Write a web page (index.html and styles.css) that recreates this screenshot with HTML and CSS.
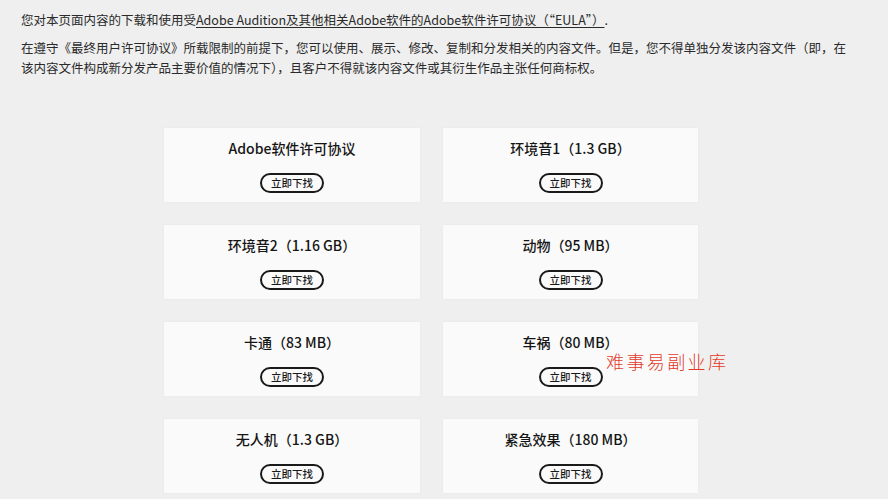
FILE: index.html
```html
<!DOCTYPE html>
<html lang="zh">
<head>
<meta charset="utf-8">
<link rel="stylesheet" href="styles.css">
</head>
<body>
<div class="page">
  <p class="intro">您对本页面内容的下载和使用受<span class="link">Adobe Audition及其他相关Adobe软件的Adobe软件许可协议（“EULA”）</span>.</p>
  <p class="intro">在遵守《最终用户许可协议》所载限制的前提下，您可以使用、展示、修改、复制和分发相关的内容文件。但是，您不得单独分发该内容文件（即，在<br>该内容文件构成新分发产品主要价值的情况下），且客户不得就该内容文件或其衍生作品主张任何商标权。</p>
  <div class="grid">
    <div class="card"><div class="title">Adobe软件许可协议</div><div class="btn">立即下找</div></div>
    <div class="card"><div class="title">环境音1（1.3 GB）</div><div class="btn">立即下找</div></div>
    <div class="card"><div class="title">环境音2（1.16 GB）</div><div class="btn">立即下找</div></div>
    <div class="card"><div class="title">动物（95 MB）</div><div class="btn">立即下找</div></div>
    <div class="card"><div class="title">卡通（83 MB）</div><div class="btn">立即下找</div></div>
    <div class="card"><div class="title">车祸（80 MB）</div><div class="btn">立即下找</div></div>
    <div class="card"><div class="title">无人机（1.3 GB）</div><div class="btn">立即下找</div></div>
    <div class="card"><div class="title">紧急效果（180 MB）</div><div class="btn">立即下找</div></div>
  </div>
  <div class="watermark">难事易副业库</div>
</div>
</body>
</html>
```

FILE: styles.css
```css
html, body {
  margin: 0;
  padding: 0;
  background: #efefef;
  height: 100%;
  overflow: hidden;
}
.page {
  position: relative;
  padding: 10px 0 0 21px;
  font-family: "Noto Sans CJK SC", "Noto Sans", sans-serif;
  color: #2a2a2a;
}
.intro {
  margin: 0 0 8px 0;
  font-size: 12.5px;
  line-height: 20px;
  white-space: nowrap;
}
.link {
  text-decoration: underline;
  text-underline-offset: 2px;
}
.grid {
  display: grid;
  grid-template-columns: 256px 255px;
  grid-auto-rows: 74px;
  column-gap: 23px;
  row-gap: 23px;
  margin: 50px 0 0 143px;
}
.card {
  background: #fafafa;
  box-shadow: 0 0 3px rgba(0,0,0,0.04);
  display: flex;
  flex-direction: column;
  align-items: center;
  padding-top: 10px;
  box-sizing: border-box;
}
.title {
  font-size: 14px;
  line-height: 20px;
  font-weight: 500;
  color: #151515;
}
.btn {
  margin-top: 15px;
  width: 64px;
  height: 20px;
  box-sizing: border-box;
  border: 2px solid #1a1a1a;
  border-radius: 10px;
  font-size: 10.5px;
  line-height: 16px;
  text-align: center;
  font-weight: 500;
  color: #1a1a1a;
}
.watermark {
  position: absolute;
  left: 606px;
  top: 348px;
  font-size: 18px;
  line-height: 26px;
  letter-spacing: 2.4px;
  color: #e23a2a;
  font-weight: 300;
}
```
